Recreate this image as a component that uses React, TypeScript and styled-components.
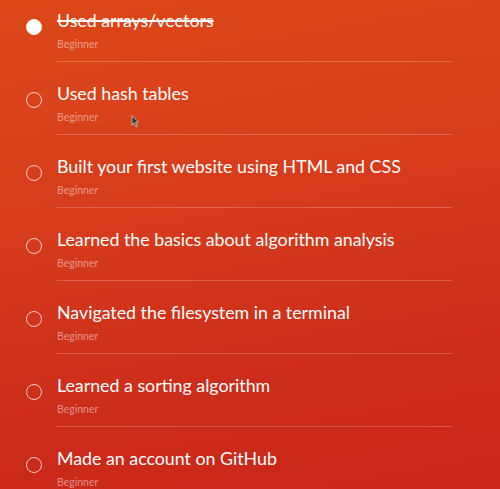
import styled, { createGlobalStyle } from "styled-components"

type Skill = {
  title: string
  level: string
  done?: boolean
}

const skills: Skill[] = [
  { title: "Used arrays/vectors", level: "Beginner", done: true },
  { title: "Used hash tables", level: "Beginner" },
  { title: "Built your first website using HTML and CSS", level: "Beginner" },
  { title: "Learned the basics about algorithm analysis", level: "Beginner" },
  { title: "Navigated the filesystem in a terminal", level: "Beginner" },
  { title: "Learned a sorting algorithm", level: "Beginner" },
  { title: "Made an account on GitHub", level: "Beginner" },
]

const GlobalStyle = createGlobalStyle`
  html, body {
    margin: 0;
    padding: 0;
    height: 100%;
    overflow: hidden;
  }
  body {
    font-family: Lato, "Open Sans", sans-serif;
  }
`

export default function App() {
  return (
    <>
      <GlobalStyle />
      <Page>
        <List>
          {skills.map(skill => (
            <Item key={skill.title}>
              <Check $done={!!skill.done} />
              <Body>
                <Title $done={!!skill.done}>{skill.title}</Title>
                <Level>{skill.level}</Level>
              </Body>
            </Item>
          ))}
        </List>
        <Cursor viewBox="0 0 12 18" aria-hidden>
          <path d="M1 1 L1 14 L4 11 L6.5 16.5 L8.5 15.5 L6 10 L10.5 10 Z" fill="#333" stroke="#ddd" strokeWidth="1" />
        </Cursor>
      </Page>
    </>
  )
}

const Page = styled.div`
  position: relative;
  width: 500px;
  height: 489px;
  overflow: hidden;
  background: linear-gradient(170deg, #dc4818 0%, #d63c1c 40%, #cc2c1a 75%, #c8261a 100%);
  padding: 7px 0 0 26px;
  box-sizing: border-box;
`

const List = styled.ul`
  list-style: none;
  margin: 0;
  padding: 0;
  display: flex;
  flex-direction: column;
  gap: 18px;
`

const Item = styled.li`
  display: flex;
  flex-flow: row nowrap;
  align-items: flex-start;
`

const Check = styled.span<{ $done: boolean }>`
  flex: none;
  width: 16px;
  height: 16px;
  margin-top: 12px;
  box-sizing: border-box;
  border-radius: 50%;
  border: 1.5px solid ${p => (p.$done ? "#fff" : "rgba(255, 255, 255, 0.75)")};
  background: ${p => (p.$done ? "#fff" : "transparent")};
`

const Body = styled.div`
  margin-left: 15px;
  width: 395px;
  padding-bottom: 10px;
  border-bottom: 1px solid rgba(255, 255, 255, 0.22);
`

const Title = styled.div<{ $done: boolean }>`
  color: #fff;
  font-size: 17.8px;
  line-height: 26px;
  white-space: nowrap;
  text-decoration: ${p => (p.$done ? "line-through" : "none")};
  text-decoration-thickness: 2px;
`

const Level = styled.div`
  margin-top: 4px;
  font-size: 10.5px;
  line-height: 14px;
  color: rgba(255, 255, 255, 0.48);
`

const Cursor = styled.svg`
  position: absolute;
  left: 131px;
  top: 115px;
  width: 9px;
  height: 13px;
`
